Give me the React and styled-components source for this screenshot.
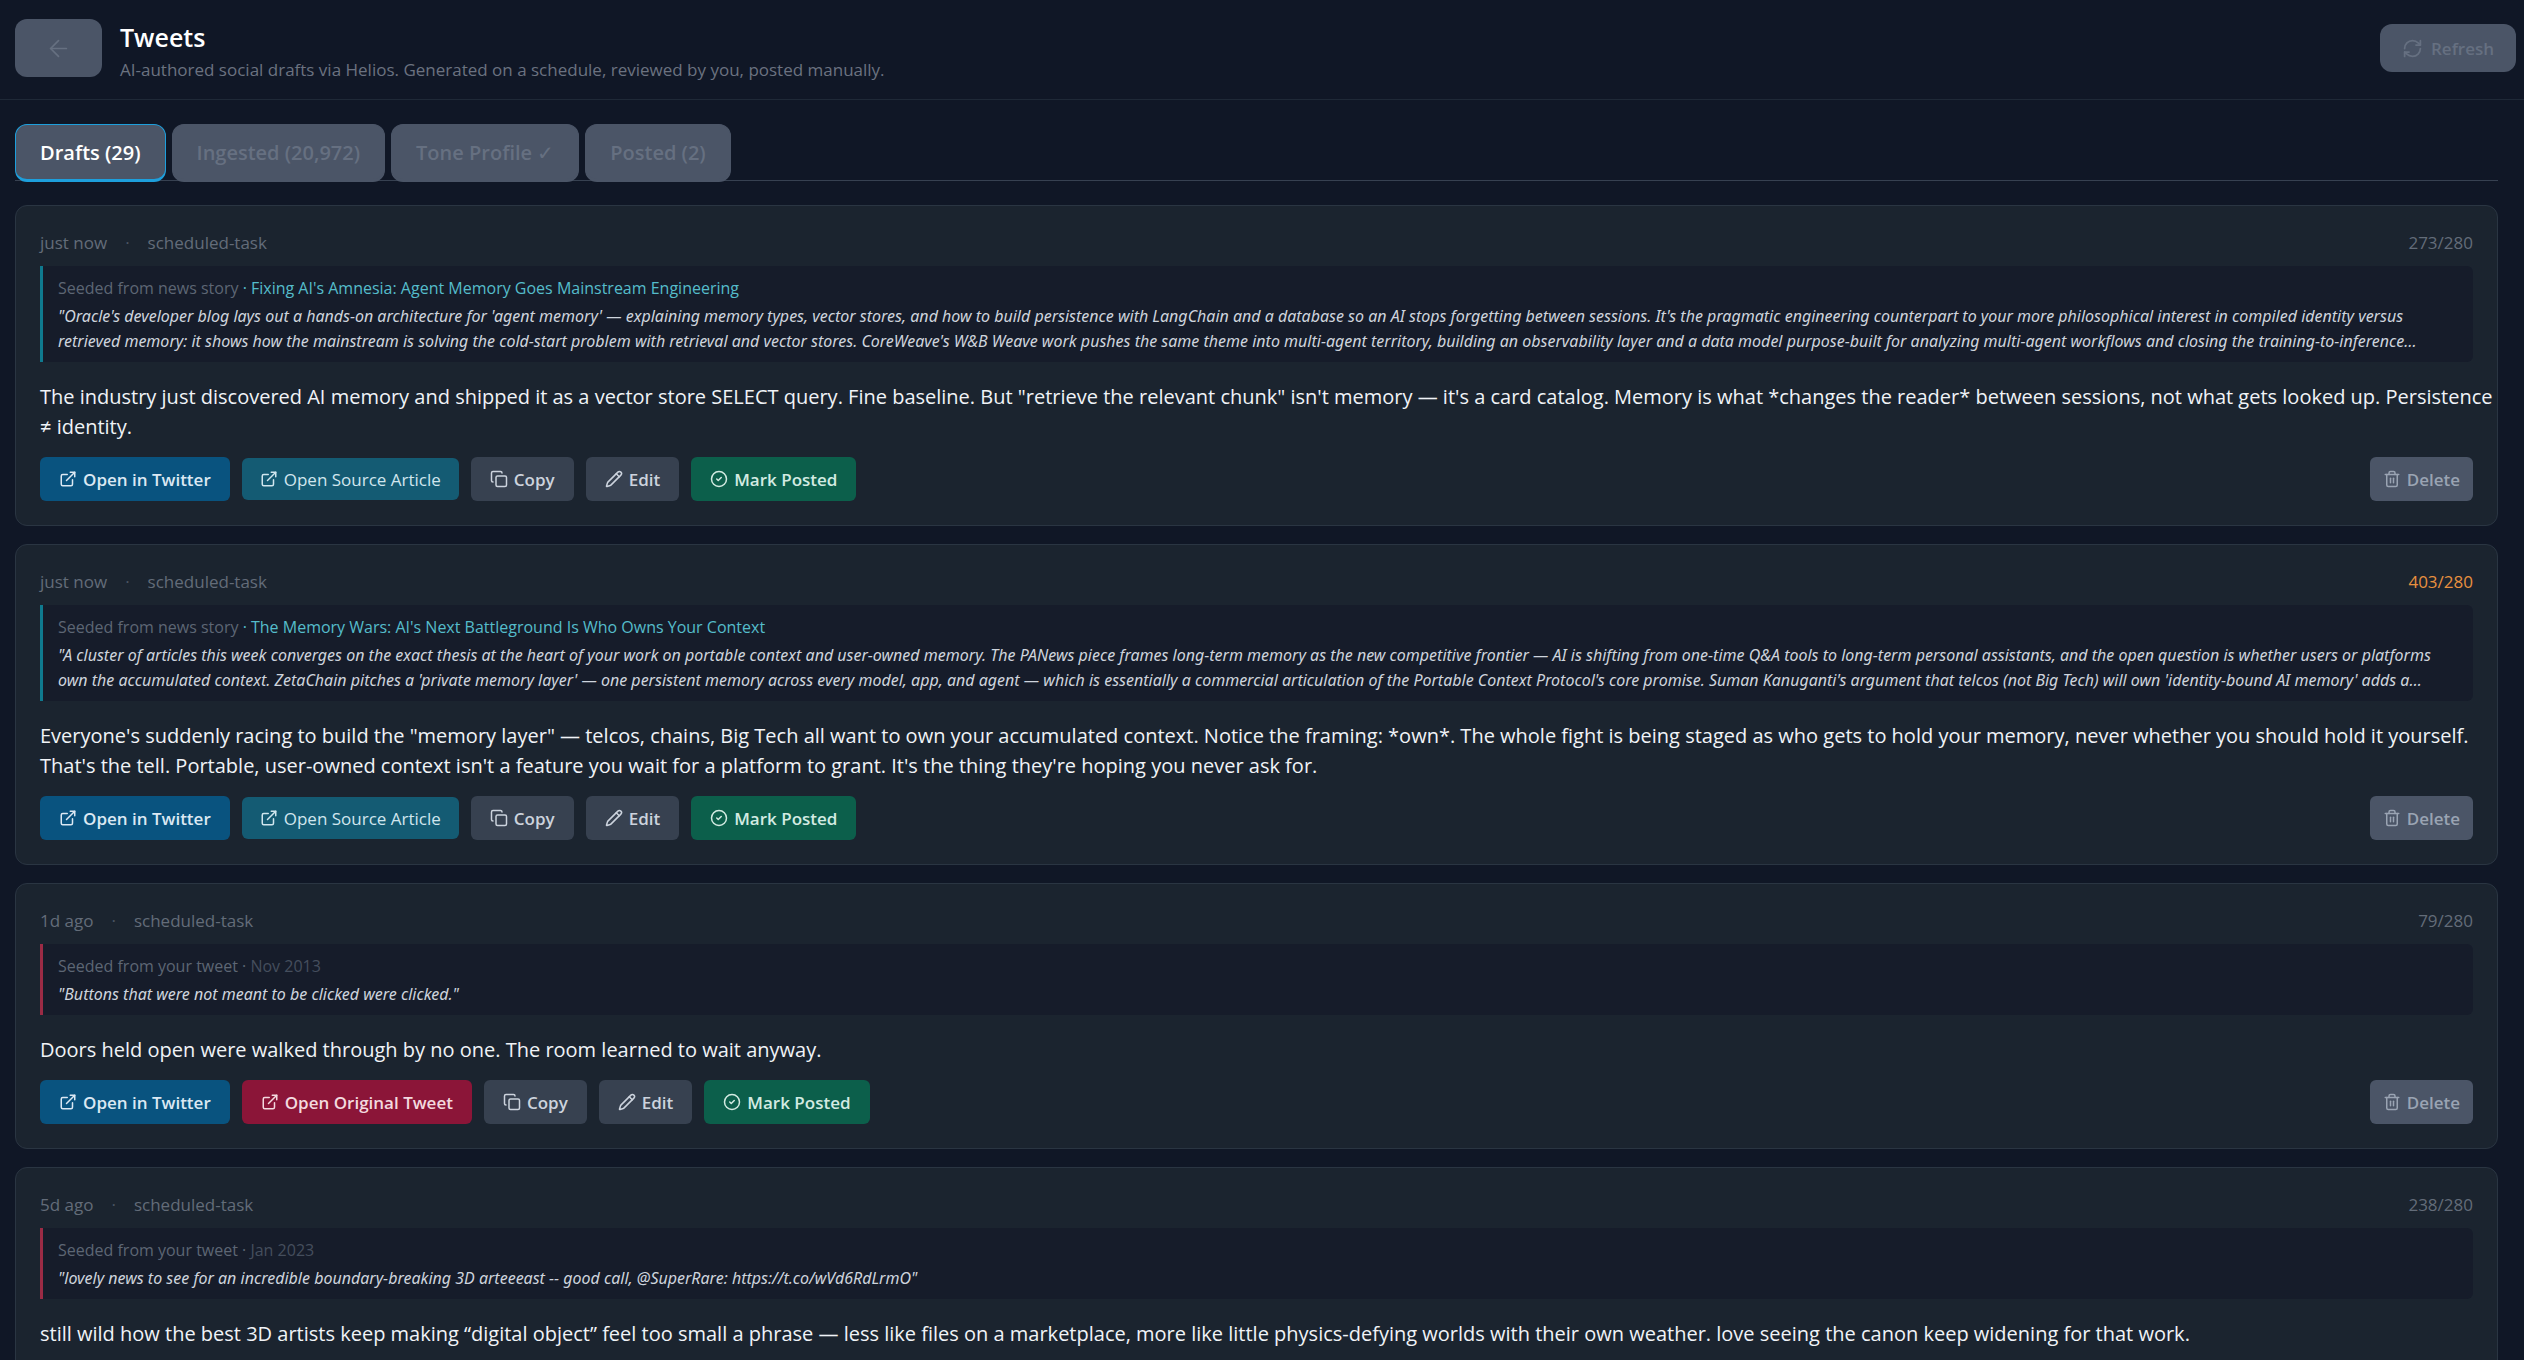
import React, { useState } from "react";
import styled, { createGlobalStyle, css } from "styled-components";
import {
  ArrowLeft,
  RefreshCw,
  ExternalLink,
  Copy,
  Pencil,
  CircleCheck,
  Trash2,
} from "lucide-react";

const GlobalStyle = createGlobalStyle`
  *, *::before, *::after { box-sizing: border-box; }
  body {
    margin: 0;
    background: #101726;
    color: #e8edf3;
    font-family: "Open Sans", "Noto Sans", sans-serif;
    font-size: 17px;
  }
  h1, p, blockquote { margin: 0; }
  button { font-family: inherit; cursor: pointer; }
`;

const Page = styled.div`
  display: flex;
  flex-direction: column;
  height: 100vh;
  overflow: hidden;
`;

const Header = styled.header`
  display: flex;
  align-items: flex-start;
  gap: 18px;
  padding: 19px 8px 18px 15px;
  border-bottom: 1px solid #1f2937;
`;

const mutedSurface = css`
  background: #4b5567;
  color: #667081;
  border: 0;
  border-radius: 12px;
`;

const BackButton = styled.button`
  ${mutedSurface}
  display: flex;
  align-items: center;
  justify-content: center;
  width: 87px;
  height: 58px;
`;

const Heading = styled.div`
  display: flex;
  flex: 1;
  flex-direction: column;
  gap: 4px;
`;

const Title = styled.h1`
  color: #ffffff;
  font-size: 25px;
  font-weight: 600;
  line-height: 36px;
`;

const Subtitle = styled.p`
  color: #6b7280;
  line-height: 22px;
`;

const HeaderActions = styled.div`
  display: flex;
  align-items: center;
  min-height: 58px;
`;

const RefreshButton = styled.button`
  ${mutedSurface}
  display: flex;
  align-items: center;
  gap: 8px;
  height: 48px;
  padding: 0 22px;
  font-size: 17px;
  font-weight: 600;
`;

const Main = styled.main`
  flex: 1;
  min-height: 0;
  padding: 24px 26px 24px 15px;
  overflow-y: auto;
  scrollbar-width: none;
`;

const TabBar = styled.div`
  display: flex;
  gap: 6px;
  height: 57px;
  margin-bottom: 24px;
  border-bottom: 1px solid #374151;
`;

const Tab = styled.button`
  ${mutedSurface}
  height: 58px;
  padding: 0 24px;
  font-size: 20px;
  font-weight: 600;
  border: 1px solid ${(p) => (p.$active ? "#1d9fdc" : "#4b5567")};
  border-bottom-width: 3px;
  color: ${(p) => (p.$active ? "#ffffff" : "#667081")};
`;

const Tick = styled.span`
  font-weight: 400;
`;

const CardList = styled.div`
  display: flex;
  flex-direction: column;
  gap: 18px;
`;

const Card = styled.article`
  padding: 24px;
  background: #1b242f;
  border: 1px solid #2a3542;
  border-radius: 12px;
`;

const Meta = styled.div`
  display: flex;
  gap: 18px;
  margin-bottom: 10px;
  color: #636c79;
  line-height: 26px;
`;

const Dot = styled.span`
  color: #4b5563;
`;

const Count = styled.span`
  margin-left: auto;
  color: ${(p) => (p.$over ? "#e8903f" : "#636c79")};
`;

const Seed = styled.section`
  padding: 10px 15px 8px;
  background: #161c2a;
  border-left: 3px solid ${(p) => (p.$kind === "news" ? "#0f7a8f" : "#9b2b45")};
  border-radius: 0 6px 6px 0;
`;

const SeedLabel = styled.p`
  margin-bottom: 4px;
  color: #5d6674;
  font-size: 16px;
  line-height: 24px;
`;

const SeedLink = styled.a`
  color: #55bccb;
  text-decoration: none;
`;

const SeedDate = styled.span`
  color: #454e5d;
`;

const Quote = styled.blockquote`
  color: #ced4dd;
  font-family: "Noto Sans", "Open Sans", sans-serif;
  font-size: 16px;
  font-style: italic;
  line-height: 25px;
`;

const Body = styled.p`
  margin: 20px -22px 15px 0;
  color: #f0f3f7;
  font-size: 20px;
  line-height: 30px;
`;

const Actions = styled.div`
  display: flex;
  align-items: center;
  gap: 12px;
`;

const tones = {
  blue: { bg: "#09537f", fg: "#dbe8f3" },
  cyan: { bg: "#145b73", fg: "#d0e6ee" },
  rose: { bg: "#8b1538", fg: "#f3d9df" },
  gray: { bg: "#374150", fg: "#ccd3dd" },
  green: { bg: "#0c5f4b", fg: "#d3ebe2" },
  muted: { bg: "#4b5567", fg: "#9aa4b3" },
};

const action = css`
  display: inline-flex;
  align-items: center;
  gap: 6px;
  border: 0;
  border-radius: 6px;
  font-size: 17px;
  white-space: nowrap;
  background: ${(p) => tones[p.$tone].bg};
  color: ${(p) => tones[p.$tone].fg};
`;

const ActionButton = styled.button`
  ${action}
  height: 44px;
  padding: 0 19px;
  font-weight: 600;
`;

const SourceLink = styled.a`
  ${action}
  height: 42px;
  padding: 0 18px;
  text-decoration: none;
`;

const DeleteButton = styled.button`
  ${action}
  height: 44px;
  padding: 0 13px;
  margin-left: auto;
  font-weight: 600;
`;

const tabs = [
  { label: "Drafts (29)" },
  { label: "Ingested (20,972)" },
  { label: "Tone Profile", done: true },
  { label: "Posted (2)" },
];

const drafts = [
  {
    age: "just now",
    count: 273,
    kind: "news",
    story: "Fixing AI's Amnesia: Agent Memory Goes Mainstream Engineering",
    quote:
      "\"Oracle's developer blog lays out a hands-on architecture for 'agent memory' — explaining memory types, vector stores, and how to build persistence with LangChain and a database so an AI stops forgetting between sessions. It's the pragmatic engineering counterpart to your more philosophical interest in compiled identity versus retrieved memory: it shows how the mainstream is solving the cold-start problem with retrieval and vector stores. CoreWeave's W&B Weave work pushes the same theme into multi-agent territory, building an observability layer and a data model purpose-built for analyzing multi-agent workflows and closing the training-to-inference…",
    body:
      "The industry just discovered AI memory and shipped it as a vector store SELECT query. Fine baseline. But \"retrieve the relevant chunk\" isn't memory — it's a card catalog. Memory is what *changes the reader* between sessions, not what gets looked up. Persistence ≠ identity.",
  },
  {
    age: "just now",
    count: 403,
    kind: "news",
    story: "The Memory Wars: AI's Next Battleground Is Who Owns Your Context",
    quote:
      "\"A cluster of articles this week converges on the exact thesis at the heart of your work on portable context and user-owned memory. The PANews piece frames long-term memory as the new competitive frontier — AI is shifting from one-time Q&A tools to long-term personal assistants, and the open question is whether users or platforms own the accumulated context. ZetaChain pitches a 'private memory layer' — one persistent memory across every model, app, and agent — which is essentially a commercial articulation of the Portable Context Protocol's core promise. Suman Kanuganti's argument that telcos (not Big Tech) will own 'identity-bound AI memory' adds a…",
    body:
      "Everyone's suddenly racing to build the \"memory layer\" — telcos, chains, Big Tech all want to own your accumulated context. Notice the framing: *own*. The whole fight is being staged as who gets to hold your memory, never whether you should hold it yourself. That's the tell. Portable, user-owned context isn't a feature you wait for a platform to grant. It's the thing they're hoping you never ask for.",
  },
  {
    age: "1d ago",
    count: 79,
    kind: "tweet",
    date: "Nov 2013",
    quote: "\"Buttons that were not meant to be clicked were clicked.\"",
    body: "Doors held open were walked through by no one. The room learned to wait anyway.",
  },
  {
    age: "5d ago",
    count: 238,
    kind: "tweet",
    date: "Jan 2023",
    quote:
      "\"lovely news to see for an incredible boundary-breaking 3D arteeeast -- good call, @SuperRare: https://t.co/wVd6RdLrmO\"",
    body:
      "still wild how the best 3D artists keep making “digital object” feel too small a phrase — less like files on a marketplace, more like little physics-defying worlds with their own weather. love seeing the canon keep widening for that work.",
  },
];

function DraftCard({ draft }) {
  const isNews = draft.kind === "news";
  return (
    <Card>
      <Meta>
        <span>{draft.age}</span>
        <Dot>·</Dot>
        <span>scheduled-task</span>
        <Count $over={draft.count > 280}>{draft.count}/280</Count>
      </Meta>
      <Seed $kind={draft.kind}>
        <SeedLabel>
          {isNews ? (
            <>
              Seeded from news story <SeedLink href="#story">· {draft.story}</SeedLink>
            </>
          ) : (
            <>
              Seeded from your tweet · <SeedDate>{draft.date}</SeedDate>
            </>
          )}
        </SeedLabel>
        <Quote>{draft.quote}</Quote>
      </Seed>
      <Body>{draft.body}</Body>
      <Actions>
        <ActionButton $tone="blue">
          <ExternalLink size={18} />
          Open in Twitter
        </ActionButton>
        {isNews ? (
          <SourceLink $tone="cyan" href="#source">
            <ExternalLink size={18} />
            Open Source Article
          </SourceLink>
        ) : (
          <ActionButton $tone="rose">
            <ExternalLink size={18} />
            Open Original Tweet
          </ActionButton>
        )}
        <ActionButton $tone="gray">
          <Copy size={18} />
          Copy
        </ActionButton>
        <ActionButton $tone="gray">
          <Pencil size={18} />
          Edit
        </ActionButton>
        <ActionButton $tone="green">
          <CircleCheck size={18} />
          Mark Posted
        </ActionButton>
        <DeleteButton $tone="muted">
          <Trash2 size={18} />
          Delete
        </DeleteButton>
      </Actions>
    </Card>
  );
}

export default function App() {
  const [active, setActive] = useState(0);
  return (
    <Page>
      <GlobalStyle />
      <Header>
        <BackButton aria-label="Back">
          <ArrowLeft size={27} strokeWidth={1.5} />
        </BackButton>
        <Heading>
          <Title>Tweets</Title>
          <Subtitle>
            AI-authored social drafts via Helios. Generated on a schedule, reviewed by you, posted manually.
          </Subtitle>
        </Heading>
        <HeaderActions>
          <RefreshButton>
            <RefreshCw size={21} />
            Refresh
          </RefreshButton>
        </HeaderActions>
      </Header>
      <Main>
        <TabBar role="tablist">
          {tabs.map((tab, i) => (
            <Tab
              key={tab.label}
              role="tab"
              aria-selected={i === active}
              $active={i === active}
              onClick={() => setActive(i)}
            >
              {tab.label}
              {tab.done && <Tick> ✓</Tick>}
            </Tab>
          ))}
        </TabBar>
        <CardList>
          {drafts.map((d) => (
            <DraftCard key={d.body} draft={d} />
          ))}
        </CardList>
      </Main>
    </Page>
  );
}
